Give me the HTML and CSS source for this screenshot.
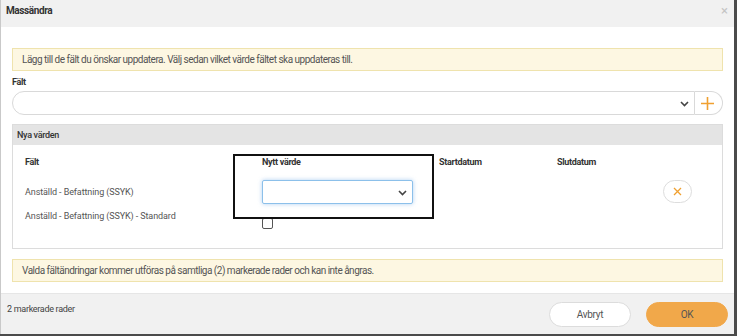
FILE: index.html
```html
<!DOCTYPE html>
<html lang="sv">
<head>
    <meta charset="UTF-8">
    <title>Massändra</title>
    <link rel="stylesheet" href="styles.css">
</head>
<body>
    <div class="dialog">
        <div class="dialog-header">
            <span class="dialog-title">Massändra</span>
            <span class="dialog-close">&times;</span>
        </div>

        <div class="dialog-body">
            <div class="notice">Lägg till de fält du önskar uppdatera. Välj sedan vilket värde fältet ska uppdateras till.</div>

            <div class="field-label">Fält</div>
            <div class="field-row">
                <div class="select wide">
                    <svg class="chevron" width="9" height="6" viewBox="0 0 9 6"><path d="M1 1l3.5 3.5L8 1" fill="none" stroke="#444" stroke-width="1.6"/></svg>
                </div>
                <button class="add-btn">
                    <svg width="13" height="13" viewBox="0 0 13 13"><path d="M6.5 0v13M0 6.5h13" stroke="#f0a030" stroke-width="1.6"/></svg>
                </button>
            </div>

            <!-- Nya värden -->
            <div class="panel">
                <div class="panel-header">Nya värden</div>
                <div class="panel-grid">
                    <div class="col-head">Fält</div>
                    <div class="col-head">Nytt värde</div>
                    <div class="col-head">Startdatum</div>
                    <div class="col-head">Slutdatum</div>
                    <div></div>

                    <div class="row-label">Anställd - Befattning (SSYK)</div>
                    <div>
                        <div class="select focused">
                            <svg class="chevron" width="9" height="6" viewBox="0 0 9 6"><path d="M1 1l3.5 3.5L8 1" fill="none" stroke="#444" stroke-width="1.6"/></svg>
                        </div>
                    </div>
                    <div></div>
                    <div></div>
                    <div>
                        <button class="remove-btn">
                            <svg width="9" height="9" viewBox="0 0 9 9"><path d="M1 1l7 7M8 1l-7 7" stroke="#f0a030" stroke-width="1.3"/></svg>
                        </button>
                    </div>

                    <div class="row-label second">Anställd - Befattning (SSYK) - Standard</div>
                    <div><span class="checkbox"></span></div>
                    <div></div>
                    <div></div>
                    <div></div>
                </div>
                <div class="highlight"></div>
            </div>

            <div class="notice warn">Valda fältändringar kommer utföras på samtliga (2) markerade rader och kan inte ångras.</div>
        </div>

        <div class="dialog-footer">
            <span class="selected-count">2 markerade rader</span>
            <div class="actions">
                <button class="btn">Avbryt</button>
                <button class="btn primary">OK</button>
            </div>
        </div>
    </div>
</body>
</html>
```

FILE: styles.css
```css
body {
    margin: 0;
    background: #4b4b4b;
    font-family: Roboto, "Liberation Sans", sans-serif;
    color: #444;
}
.dialog {
    width: 733px;
    height: 334px;
    background: #fff;
    border-left: 1px solid #c9c9c9;
    display: flex;
    flex-direction: column;
}
.dialog-header {
    height: 27px;
    box-sizing: border-box;
    background: #f1f1f1;
    display: flex;
    align-items: flex-start;
    justify-content: space-between;
    padding: 5px 6px 0 5px;
}
.dialog-title {
    font-size: 10px;
    font-weight: bold;
    color: #333;
    letter-spacing: -0.4px;
}
.dialog-close {
    color: #c4c4c4;
    font-size: 13px;
    line-height: 1;
    margin-top: -1px;
}
.dialog-body {
    flex: 1;
    padding: 21px 11px 0 11px;
}
.notice {
    height: 21px;
    background: #fdf7e2;
    border: 1px solid #efe3ad;
    padding: 0 9px;
    display: flex;
    align-items: center;
    font-size: 10px;
    color: #555;
    letter-spacing: -0.5px;
}
.notice.warn {
    margin-top: 10px;
}
.field-label {
    font-size: 9px;
    font-weight: bold;
    color: #333;
    margin: 6px 0 4px;
    letter-spacing: -0.3px;
}
.field-row {
    display: flex;
    height: 24px;
}
.select {
    position: relative;
    height: 22px;
    border: 1px solid #d9d9d9;
    background: #fff;
    box-sizing: content-box;
}
.select .chevron {
    position: absolute;
    right: 5px;
    top: 9px;
}
.select.wide {
    flex: 1;
    border-radius: 12px 0 0 12px;
}
.add-btn {
    width: 28px;
    height: 24px;
    border: 1px solid #d9d9d9;
    border-left: none;
    border-radius: 0 12px 12px 0;
    background: #fff;
    padding: 0 2px 0 0;
    display: flex;
    align-items: center;
    justify-content: center;
}
.panel {
    position: relative;
    margin-top: 9px;
    border: 1px solid #dcdcdc;
    height: 123px;
}
.panel-header {
    height: 20px;
    background: #e4e4e4;
    padding-left: 4px;
    display: flex;
    align-items: center;
    font-size: 9px;
    font-weight: 500;
    color: #333;
    letter-spacing: -0.3px;
}
.panel-grid {
    display: grid;
    grid-template-columns: 237px 177px 118px 106px auto;
    grid-template-rows: 14px 24px 24px;
    row-gap: 9px;
    padding: 12px 12px 0;
}
.col-head {
    font-size: 9px;
    font-weight: bold;
    color: #333;
    letter-spacing: -0.3px;
}
.row-label {
    font-size: 9px;
    color: #555;
    display: flex;
    align-items: center;
    letter-spacing: -0.1px;
}
.row-label.second {
    align-items: flex-start;
    margin-top: -2px;
}
.select.focused {
    width: 149px;
    border-color: #8cc0ea;
    border-radius: 2px;
    box-shadow: 0 0 4px rgba(110, 170, 230, 0.55);
}
.checkbox {
    display: block;
    width: 9px;
    height: 9px;
    border: 1px solid #555;
    border-radius: 2px;
    margin-top: 5px;
}
.remove-btn {
    width: 29px;
    height: 23px;
    border: 1px solid #ddd;
    border-radius: 12px;
    background: #fff;
    padding: 0;
    display: flex;
    align-items: center;
    justify-content: center;
}
.highlight {
    position: absolute;
    left: 220px;
    top: 29px;
    width: 197px;
    height: 61px;
    border: 2px solid #111;
}
.dialog-footer {
    height: 40px;
    background: #f1f1f1;
    border-top: 1px solid #e6e6e6;
    display: flex;
    align-items: center;
    justify-content: space-between;
    padding: 0 6px 0 6px;
}
.selected-count {
    font-size: 9px;
    color: #444;
    letter-spacing: -0.3px;
    margin-top: -11px;
}
.actions {
    display: flex;
    gap: 15px;
}
.btn {
    width: 82px;
    height: 25px;
    border: 1px solid #dcdcdc;
    border-radius: 13px;
    background: #fff;
    font-family: Roboto, "Liberation Sans", sans-serif;
    font-size: 10px;
    color: #555;
    letter-spacing: -0.3px;
}
.btn.primary {
    background: #f1a84a;
    border-color: #f1a84a;
}
```
